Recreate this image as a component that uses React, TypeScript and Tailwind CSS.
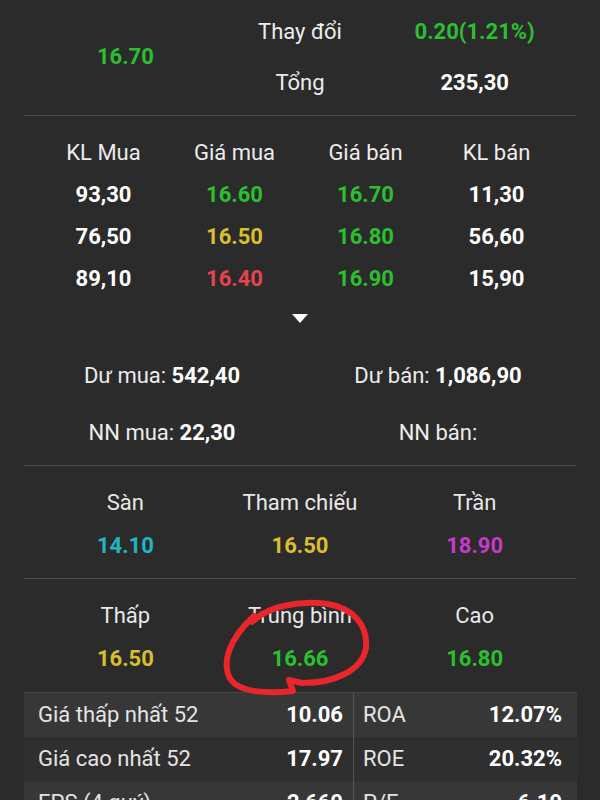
import React from "react";

const GREEN = "text-[#2cbf30]";
const YELLOW = "text-[#d9bf2b]";
const RED = "text-[#e5444b]";

const book = [
  { kl: "93,30", buy: "16.60", buyColor: GREEN, sell: "16.70", klSell: "11,30" },
  { kl: "76,50", buy: "16.50", buyColor: YELLOW, sell: "16.80", klSell: "56,60" },
  { kl: "89,10", buy: "16.40", buyColor: RED, sell: "16.90", klSell: "15,90" },
];

const stats = [
  { l: "Giá thấp nhất 52", lv: "10.06", r: "ROA", rv: "12.07%", bg: "bg-[#373737]" },
  { l: "Giá cao nhất 52", lv: "17.97", r: "ROE", rv: "20.32%", bg: "bg-[#2f2f2f]" },
  { l: "EPS (4 quý)", lv: "2,660", r: "P/E", rv: "6.19", bg: "bg-[#373737]" },
];

const Divider = () => <div className="h-px bg-[#4d4d4d]" />;

const Cell = ({ label, value, color }: { label: string; value: string; color: string }) => (
  <div className="flex flex-col items-center">
    <div className="h-[43px] flex items-center text-[#e8e8e8]">{label}</div>
    <div className={`h-[43px] flex items-center font-bold ${color}`}>{value}</div>
  </div>
);

export default function App() {
  return (
    <div
      className="relative w-[600px] h-[800px] overflow-hidden bg-[#2b2b2b] text-[22px] leading-none text-[#ececec]"
      style={{ fontFamily: "Roboto, 'Noto Sans', sans-serif" }}
    >
      <div className="px-6">
        {/* price summary */}
        <div className="pt-[6px] pb-[7px] px-[14px] grid grid-cols-3 grid-rows-[51px_51px]">
          <div className={`row-span-2 flex items-center justify-center font-bold ${GREEN}`}>16.70</div>
          <div className="flex items-center justify-center">Thay đổi</div>
          <div className={`flex items-center justify-center font-bold ${GREEN}`}>0.20(1.21%)</div>
          <div className="flex items-center justify-center">Tổng</div>
          <div className="flex items-center justify-center font-bold text-white">235,30</div>
        </div>
        <Divider />

        {/* order book */}
        <div className="pt-[16px] px-[14px]">
          <div className="grid grid-cols-4 h-[42px] items-center text-center">
            <div>KL Mua</div>
            <div>Giá mua</div>
            <div>Giá bán</div>
            <div>KL bán</div>
          </div>
          {book.map((r, i) => (
            <div key={i} className="grid grid-cols-4 h-[42px] items-center text-center font-bold">
              <div className="text-white">{r.kl}</div>
              <div className={r.buyColor}>{r.buy}</div>
              <div className={GREEN}>{r.sell}</div>
              <div className="text-white">{r.klSell}</div>
            </div>
          ))}
        </div>
        <div className="h-[47px] flex justify-center pt-[14px]">
          <svg width="16" height="9" viewBox="0 0 16 9">
            <path d="M0 0 H16 L8 9 Z" fill="#ffffff" />
          </svg>
        </div>

        <div className="grid grid-cols-2">
          <div className="h-[57px] flex items-center justify-center">
            Dư mua:&nbsp;<span className="font-bold text-white">542,40</span>
          </div>
          <div className="h-[57px] flex items-center justify-center">
            Dư bán:&nbsp;<span className="font-bold text-white">1,086,90</span>
          </div>
          <div className="h-[57px] flex items-center justify-center px-[18px]">
            <div className="w-full h-[40px] flex items-center justify-center bg-[#2c2c2c]">
              NN mua:&nbsp;<span className="font-bold text-white">22,30</span>
            </div>
          </div>
          <div className="h-[57px] flex items-center justify-center px-[14px]">
            <div className="w-full h-[40px] flex items-center justify-center bg-[#2c2c2c]">NN bán:</div>
          </div>
        </div>
        <div className="h-[4px]" />
        <Divider />

        {/* reference prices */}
        <div className="pt-[15px] pb-[11px] px-[14px] grid grid-cols-3">
          <Cell label="Sàn" value="14.10" color="text-[#20b6c0]" />
          <Cell label="Tham chiếu" value="16.50" color={YELLOW} />
          <Cell label="Trần" value="18.90" color="text-[#c43bc9]" />
        </div>
        <Divider />
        <div className="pt-[15px] pb-[12px] px-[14px] grid grid-cols-3">
          <Cell label="Thấp" value="16.50" color={YELLOW} />
          <Cell label="Trung bình" value="16.66" color={GREEN} />
          <Cell label="Cao" value="16.80" color={GREEN} />
        </div>

        {/* stats table */}
        <div className="border-t border-[#474747] w-[553px]">
          {stats.map((s, i) => (
            <div key={i} className={`grid grid-cols-[329px_1fr] h-[44px] ${s.bg}`}>
              <div className="flex items-center justify-between pl-[14px] pr-[10px] text-[#e4e4e4]">
                <span>{s.l}</span>
                <span className="font-bold text-white">{s.lv}</span>
              </div>
              <div className="flex items-center justify-between pl-[9px] pr-[15px] border-l border-[#555555] text-[#e4e4e4]">
                <span>{s.r}</span>
                <span className="font-bold text-white">{s.rv}</span>
              </div>
            </div>
          ))}
        </div>
      </div>

      {/* hand-drawn annotation */}
      <svg className="absolute left-0 top-0 pointer-events-none" width="600" height="800">
        <path
          d="M252 622 C268 606 300 600 328 604 C352 608 368 624 366 648 C362 670 336 683 302 683 L289 680 L293 691 C266 694 240 692 231 680 C221 664 228 640 254 616"
          fill="none"
          stroke="#e8262b"
          strokeWidth="6"
          strokeLinecap="round"
          strokeLinejoin="round"
        />
      </svg>
    </div>
  );
}
